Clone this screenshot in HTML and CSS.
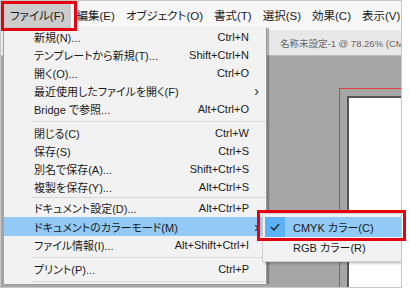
FILE: index.html
```html
<!DOCTYPE html>
<html lang="ja">
<head>
    <meta charset="UTF-8">
    <title>ファイルメニュー</title>
    <link rel="stylesheet" href="styles.css">
</head>
<body>
    <div class="shot">
        <div class="screen">
            <!-- メニューバー -->
            <div class="menubar">
                <span class="menu-title active">ファイル(F)</span>
                <span class="menu-title">編集(E)</span>
                <span class="menu-title">オブジェクト(O)</span>
                <span class="menu-title">書式(T)</span>
                <span class="menu-title">選択(S)</span>
                <span class="menu-title">効果(C)</span>
                <span class="menu-title">表示(V)</span>
            </div>

            <!-- ドキュメントタブ -->
            <div class="tabstrip">
                <span class="doc-tab">名称未設定-1 @ 78.26% (CM</span>
            </div>

            <!-- カンバス -->
            <div class="canvas">
                <div class="bleed">
                    <div class="artboard"></div>
                </div>
            </div>

            <!-- ファイルメニュー -->
            <div class="dropdown">
                <div class="item"><span>新規(N)...</span><span class="key">Ctrl+N</span></div>
                <div class="item"><span>テンプレートから新規(T)...</span><span class="key">Shift+Ctrl+N</span></div>
                <div class="item"><span>開く(O)...</span><span class="key">Ctrl+O</span></div>
                <div class="item"><span>最近使用したファイルを開く(F)</span><span class="arrow">›</span></div>
                <div class="item"><span>Bridge で参照...</span><span class="key">Alt+Ctrl+O</span></div>
                <div class="sep"></div>
                <div class="item"><span>閉じる(C)</span><span class="key">Ctrl+W</span></div>
                <div class="item"><span>保存(S)</span><span class="key">Ctrl+S</span></div>
                <div class="item"><span>別名で保存(A)...</span><span class="key">Shift+Ctrl+S</span></div>
                <div class="item"><span>複製を保存(Y)...</span><span class="key">Alt+Ctrl+S</span></div>
                <div class="sep tight"></div>
                <div class="item"><span>ドキュメント設定(D)...</span><span class="key">Alt+Ctrl+P</span></div>
                <div class="item hover"><span>ドキュメントのカラーモード(M)</span><span class="arrow">›</span></div>
                <div class="item"><span>ファイル情報(I)...</span><span class="key">Alt+Shift+Ctrl+I</span></div>
                <div class="sep"></div>
                <div class="item"><span>プリント(P)...</span><span class="key">Ctrl+P</span></div>
                <div class="sep"></div>
            </div>

            <!-- サブメニュー -->
            <div class="submenu">
                <div class="sub-item hover">
                    <span class="check">
                        <svg width="10" height="8" viewBox="0 0 10 8"><polyline points="1,4 4,7 9,1" fill="none" stroke="#1a1a1a" stroke-width="1.2"/></svg>
                    </span>
                    <span>CMYK カラー(C)</span>
                </div>
                <div class="sub-item">
                    <span class="check"></span>
                    <span>RGB カラー(R)</span>
                </div>
            </div>
        </div>

        <!-- 注釈の赤枠 -->
        <div class="mark mark-file"></div>
        <div class="mark mark-cmyk"></div>
    </div>
</body>
</html>
```

FILE: styles.css
```css
body {
    margin: 0;
    background: #fff;
    font-family: "Liberation Sans", "Noto Sans CJK JP", sans-serif;
    font-feature-settings: "palt";
    font-size: 11px;
    color: #1a1a1a;
}
.shot {
    position: relative;
    width: 410px;
    height: 290px;
}
.screen {
    position: relative;
    width: 400px;
    height: 286px;
    border: 1px solid #c8c8c8;
    overflow: hidden;
    display: flex;
    flex-direction: column;
    background: #f0f0f0;
}
.menubar {
    height: 29px;
    display: flex;
    align-items: center;
    gap: 3px;
    padding-left: 3px;
    background: #f7f7f7;
    font-size: 11.5px;
    white-space: nowrap;
}
.menu-title {
    flex-shrink: 0;
    padding: 4px 4px;
    line-height: 16px;
}
.menu-title.active {
    padding: 4px 6px;
    margin-right: -1px;
    background: #cccccc;
}
.tabstrip {
    height: 25px;
    display: flex;
    align-items: center;
    background: #e8e8e8;
    border-bottom: 1px solid #bdbdbd;
}
.doc-tab {
    margin-left: 279px;
    font-size: 9.5px;
    color: #666;
    white-space: nowrap;
}
.canvas {
    flex: 1;
    background: #a6a6a6;
    padding: 32px 0 0 338px;
}
.bleed {
    height: 100%;
    border-top: 1px solid #e83a3a;
    border-left: 1px solid #e83a3a;
    padding: 7px 0 0 7px;
}
.artboard {
    height: 100%;
    background: #fff;
    border-top: 2px solid #555;
    border-left: 2px solid #555;
}
.dropdown {
    position: absolute;
    left: 2px;
    top: 27px;
    width: 262px;
    background: #f2f2f2;
    border-left: 1px solid #a0a0a0;
    border-right: 1px solid #9a9a9a;
    box-shadow: 2px 0 1px rgba(0, 0, 0, 0.25);
}
.item {
    height: 18px;
    display: flex;
    align-items: center;
    padding: 0 17px 0 30px;
    white-space: nowrap;
}
.item .key {
    margin-left: auto;
}
.item .arrow {
    margin-left: auto;
    margin-right: -10px;
    font-size: 14px;
}
.item.hover {
    background: #91c9f7;
    height: 19px;
}
.sep {
    height: 1px;
    background: #d7d7d7;
    margin: 3px 0 2px 28px;
}
.sep.tight {
    margin: 1px 0 1px 28px;
}
.submenu {
    position: absolute;
    left: 261px;
    top: 212px;
    width: 138px;
    padding: 3px 2px 4px 2px;
    background: #f2f2f2;
    border: 1px solid #cfcfcf;
    box-shadow: 2px 2px 2px rgba(0, 0, 0, 0.2);
}
.sub-item {
    height: 20px;
    display: flex;
    align-items: center;
    gap: 8px;
}
.sub-item.hover {
    background: #91c9f7;
}
.check {
    width: 20px;
    height: 20px;
    display: flex;
    align-items: center;
    justify-content: center;
}
.sub-item.hover .check {
    background: #5cb1f7;
}
.mark {
    position: absolute;
    border: 3px solid #e50012;
}
.mark-file {
    left: 1px;
    top: 1px;
    width: 70px;
    height: 24px;
}
.mark-cmyk {
    left: 257px;
    top: 210px;
    width: 143px;
    height: 25px;
}
```
